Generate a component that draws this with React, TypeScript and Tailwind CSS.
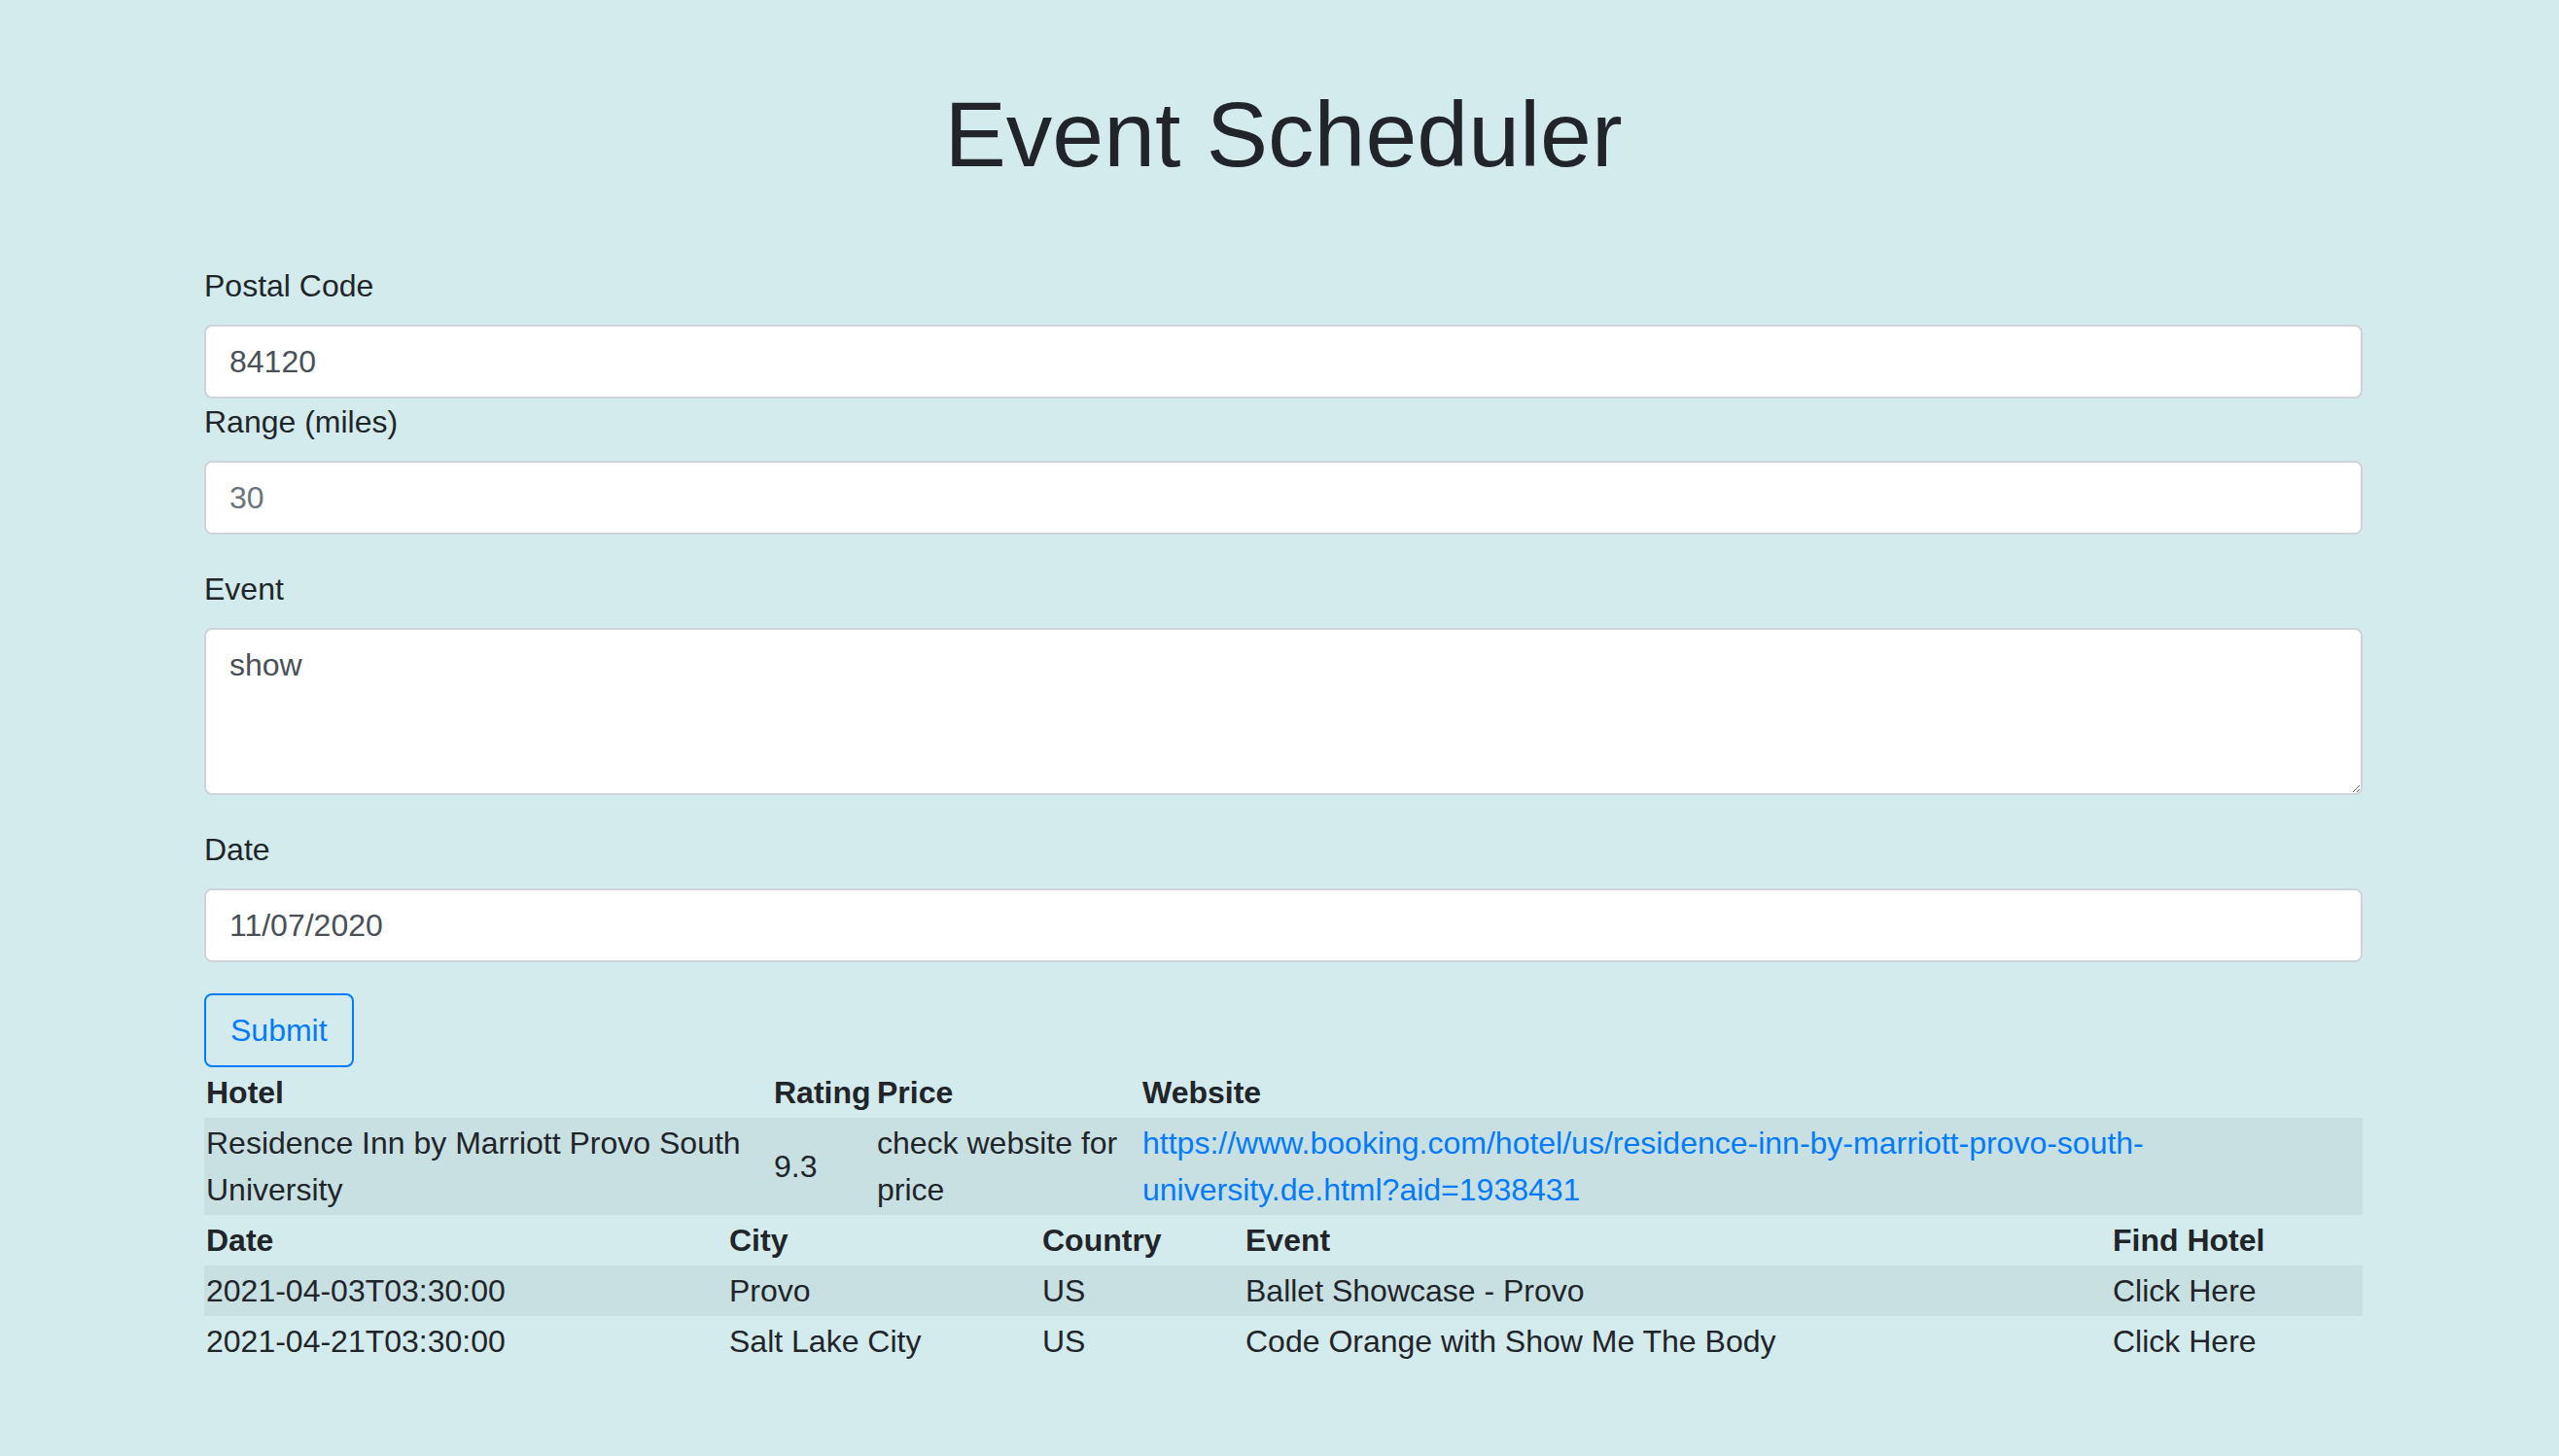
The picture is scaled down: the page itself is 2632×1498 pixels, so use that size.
export default function App() {
    const hotels = [
        {
            name: "Residence Inn by Marriott Provo South University",
            rating: "9.3",
            price: "check website for price",
            url: "https://www.booking.com/hotel/us/residence-inn-by-marriott-provo-south-university.de.html?aid=1938431"
        }
    ]

    const events = [
        { date: "2021-04-03T03:30:00", city: "Provo", country: "US", name: "Ballet Showcase - Provo" },
        { date: "2021-04-21T03:30:00", city: "Salt Lake City", country: "US", name: "Code Orange with Show Me The Body" }
    ]

    const label = "block mb-[16px] leading-[48px]"
    const input =
        "block w-full h-[76px] px-[24px] py-[12px] bg-white border-2 border-[#ced4da] rounded-[8px] text-[#495057] text-[32px] leading-[48px] outline-none placeholder:text-[#6c757d]"

    return (
        <div className="min-h-screen bg-[#d4ebed] text-[#212529] text-[32px] leading-[48px] font-['Liberation_Sans',Arial,sans-serif]">
            <div className="ml-[210px] w-[2220px] pt-[81px]">
                <h1 className="text-center text-[95px] leading-[115px] font-normal mb-[74px]">Event Scheduler</h1>

                <form onSubmit={(e) => e.preventDefault()}>
                    <div>
                        <label className={label}>Postal Code</label>
                        <input className={input} defaultValue="84120" />
                    </div>
                    <div className="mb-[32px]">
                        <label className={label}>Range (miles)</label>
                        <input className={input} placeholder="30" />
                    </div>
                    <div className="mb-[32px]">
                        <label className={label}>Event</label>
                        <textarea
                            rows={3}
                            defaultValue="show"
                            className="block w-full h-[172px] px-[24px] py-[12px] bg-white border-2 border-[#ced4da] rounded-[8px] text-[#495057] text-[32px] leading-[48px] outline-none"
                        />
                    </div>
                    <div className="mb-[32px]">
                        <label className={label}>Date</label>
                        <input className={input} defaultValue="11/07/2020" />
                    </div>
                    <button
                        type="submit"
                        className="block h-[76px] px-[25px] border-2 border-[#007bff] rounded-[8px] text-[#007bff] leading-[48px]"
                    >
                        Submit
                    </button>
                </form>

                <table className="w-full table-fixed border-collapse">
                    <colgroup>
                        <col className="w-[584px]" />
                        <col className="w-[106px]" />
                        <col className="w-[273px]" />
                        <col />
                    </colgroup>
                    <thead>
                        <tr>
                            <th className="p-[2px] text-left font-bold">Hotel</th>
                            <th className="p-[2px] text-left font-bold">Rating</th>
                            <th className="p-[2px] text-left font-bold">Price</th>
                            <th className="p-[2px] text-left font-bold">Website</th>
                        </tr>
                    </thead>
                    <tbody>
                        {hotels.map((h) => (
                            <tr key={h.name} className="bg-[#c9e0e2] align-middle">
                                <td className="p-[2px]">{h.name}</td>
                                <td className="p-[2px]">{h.rating}</td>
                                <td className="p-[2px]">{h.price}</td>
                                <td className="p-[2px]">
                                    <a href={h.url} className="text-[#007bff]">
                                        {h.url}
                                    </a>
                                </td>
                            </tr>
                        ))}
                    </tbody>
                </table>

                <table className="w-full table-fixed border-collapse">
                    <colgroup>
                        <col className="w-[538px]" />
                        <col className="w-[322px]" />
                        <col className="w-[209px]" />
                        <col className="w-[892px]" />
                        <col />
                    </colgroup>
                    <thead>
                        <tr>
                            <th className="p-[2px] text-left font-bold">Date</th>
                            <th className="p-[2px] text-left font-bold">City</th>
                            <th className="p-[2px] text-left font-bold">Country</th>
                            <th className="p-[2px] text-left font-bold">Event</th>
                            <th className="p-[2px] text-left font-bold">Find Hotel</th>
                        </tr>
                    </thead>
                    <tbody>
                        {events.map((ev, i) => (
                            <tr key={ev.date} className={i % 2 === 0 ? "bg-[#c9e0e2]" : ""}>
                                <td className="p-[2px]">{ev.date}</td>
                                <td className="p-[2px]">{ev.city}</td>
                                <td className="p-[2px]">{ev.country}</td>
                                <td className="p-[2px]">{ev.name}</td>
                                <td className="p-[2px]">Click Here</td>
                            </tr>
                        ))}
                    </tbody>
                </table>
            </div>
        </div>
    )
}
